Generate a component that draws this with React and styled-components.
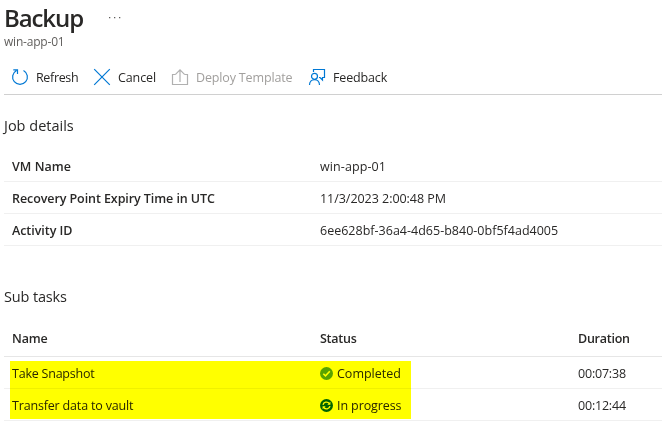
import React from "react";
import styled, { createGlobalStyle } from "styled-components";

const GlobalStyle = createGlobalStyle`
  * { box-sizing: border-box; }
  body {
    margin: 0;
    background: #fff;
    color: #292827;
    font-family: "Open Sans", "Segoe UI", sans-serif;
    font-size: 12.5px;
    overflow: hidden;
  }
`;

const Page = styled.main`
  width: 662px;
  height: 447px;
  padding-left: 4px;
  overflow: hidden;
  white-space: nowrap;
`;

const Header = styled.header`
  display: flex;
  align-items: center;
  height: 35px;
`;

const Title = styled.h1`
  margin: 0;
  font-size: 24px;
  font-weight: 600;
  line-height: 35px;
  letter-spacing: -1.1px;
  width: 105px;
`;

const MoreIcon = styled.svg`
  display: block;
  fill: #605e5c;
`;

const Subtitle = styled.div`
  height: 24px;
  line-height: 14px;
  font-size: 12px;
  letter-spacing: -0.2px;
  color: #605e5c;
`;

const Toolbar = styled.nav`
  display: flex;
  height: 36px;
  padding: 0 0 0 8px;
  border-bottom: 1px solid #d0d0d0;
`;

const Command = styled.button`
  display: flex;
  align-items: center;
  gap: 8px;
  width: ${(p) => p.$width}px;
  height: 36px;
  padding: 0;
  border: 0;
  background: none;
  font: inherit;
  letter-spacing: ${(p) => p.$tracking || 0}px;
  color: ${(p) => (p.disabled ? "#a19f9d" : "#292827")};
`;

const CommandIcon = styled.svg`
  flex: none;
  width: 16px;
  height: 16px;
  margin-top: -1px;
  overflow: visible;
  fill: none;
  stroke: ${(p) => (p.$muted ? "#b0b0b0" : "#0078d4")};
  stroke-width: 1.2;
`;

const SectionTitle = styled.h2`
  margin: 0;
  height: ${(p) => p.$height}px;
  padding-top: ${(p) => p.$top}px;
  font-size: 14.5px;
  font-weight: 400;
  line-height: 20px;
  letter-spacing: ${(p) => p.$tracking || 0}px;
`;

const Row = styled.div`
  display: grid;
  grid-template-columns: 308px 258px 1fr;
  align-items: center;
  height: ${(p) => (p.$head ? 37 : 32)}px;
  padding: 1px 0 0 8px;
  border-bottom: 1px solid ${(p) => (p.$head ? "#e6e6e6" : "#f0f0f0")};
`;

const Cell = styled.div`
  display: flex;
  align-items: center;
  gap: 4px;
  font-weight: ${(p) => (p.$strong ? 600 : 400)};
  letter-spacing: ${(p) => p.$tracking || 0}px;
`;

const TaskTable = styled.section`
  position: relative;
`;

const Marker = styled.div`
  position: absolute;
  left: 6px;
  bottom: 2px;
  width: 401px;
  height: 58px;
  background: #ff0;
  mix-blend-mode: multiply;
`;

const StatusIcon = styled.svg`
  flex: none;
  width: 13px;
  height: 13px;
  fill: none;
  stroke: #fff;
`;

const Completed = () => (
  <StatusIcon viewBox="0 0 13 13" strokeWidth="1.6">
    <circle cx="6.5" cy="6.5" r="6.5" fill="#57a300" stroke="none" />
    <path d="M3.3 6.7 5.5 8.9 9.8 4.3" />
  </StatusIcon>
);

const InProgress = () => (
  <StatusIcon viewBox="0 0 13 13" strokeWidth="1.3">
    <circle cx="6.5" cy="6.5" r="6.5" fill="#006400" stroke="none" />
    <path d="M3 5.8C3.5 3 7.5 2.2 9.3 4.5M10 7.2C9.5 10 5.5 10.8 3.7 8.5" />
    <path d="M10.4 2.7V5.8H7.3ZM2.6 10.3V7.2H5.7Z" fill="#fff" stroke="none" />
  </StatusIcon>
);

const details = [
  ["VM Name", "win-app-01", 0.05, 0.1],
  ["Recovery Point Expiry Time in UTC", "11/3/2023 2:00:48 PM", -0.08, -0.04],
  ["Activity ID", "6ee628bf-36a4-4d65-b840-0bf5f4ad4005", -0.05, 0.01],
];

const tasks = [
  ["Take Snapshot", Completed, "Completed", "00:07:38", -0.22, 0],
  ["Transfer data to vault", InProgress, "In progress", "00:12:44", -0.17, -0.1],
];

export default function App() {
  return (
    <Page>
      <GlobalStyle />
      <Header>
        <Title>Backup</Title>
        <MoreIcon width="12" height="3" viewBox="0 0 12 3">
          <path d="M0 1h1.3v1.3H0zM5 1h1.3v1.3H5zM10 1h1.3v1.3H10z" />
        </MoreIcon>
      </Header>
      <Subtitle>win-app-01</Subtitle>
      <Toolbar>
        <Command $width={82} $tracking={-0.35}>
          <CommandIcon viewBox="0 0 16 16">
            <path d="M4.5 1.5A7.4 7.4 0 1 0 11.5 1.5M1.3 .8H5.5V5" />
          </CommandIcon>
          Refresh
        </Command>
        <Command $width={78} $tracking={-0.1}>
          <CommandIcon viewBox="0 0 16 16">
            <path d="M.2.2 15.8 15.8M15.8.2.2 15.8" />
          </CommandIcon>
          Cancel
        </Command>
        <Command $width={137} $tracking={-0.15} disabled>
          <CommandIcon viewBox="0 0 16 16" $muted>
            <path d="M3.5 5.5H.5V15.5H15.5V5.5H12.5M8 13V.8M3.5 5.3 8 .8 12.5 5.3" />
          </CommandIcon>
          Deploy Template
        </Command>
        <Command $width={90} $tracking={-0.15}>
          <CommandIcon viewBox="0 0 16 16">
            <path d="M4.5 3V.5H15.5V8.5H13.5V11L11 8.5H10" />
            <circle cx="5.5" cy="7.3" r="3" />
            <path d="M.5 16C.5 8.7 10.5 8.7 10.5 16" />
          </CommandIcon>
          Feedback
        </Command>
      </Toolbar>
      <SectionTitle $height={55} $top={21}>Job details</SectionTitle>
      {details.map(([label, value, labelTracking, valueTracking]) => (
        <Row key={label}>
          <Cell $strong $tracking={labelTracking}>{label}</Cell>
          <Cell $tracking={valueTracking}>{value}</Cell>
        </Row>
      ))}
      <SectionTitle $height={74} $top={41} $tracking={-0.15}>Sub tasks</SectionTitle>
      <TaskTable>
        <Row $head>
          <Cell $strong $tracking={-0.15}>Name</Cell>
          <Cell $strong $tracking={-0.25}>Status</Cell>
          <Cell $strong $tracking={-0.25}>Duration</Cell>
        </Row>
        {tasks.map(([name, Icon, status, duration, nameTracking, statusTracking]) => (
          <Row key={name}>
            <Cell $tracking={nameTracking}>{name}</Cell>
            <Cell $tracking={statusTracking}>
              <Icon />
              {status}
            </Cell>
            <Cell $tracking={-0.2}>{duration}</Cell>
          </Row>
        ))}
        <Marker />
      </TaskTable>
    </Page>
  );
}
